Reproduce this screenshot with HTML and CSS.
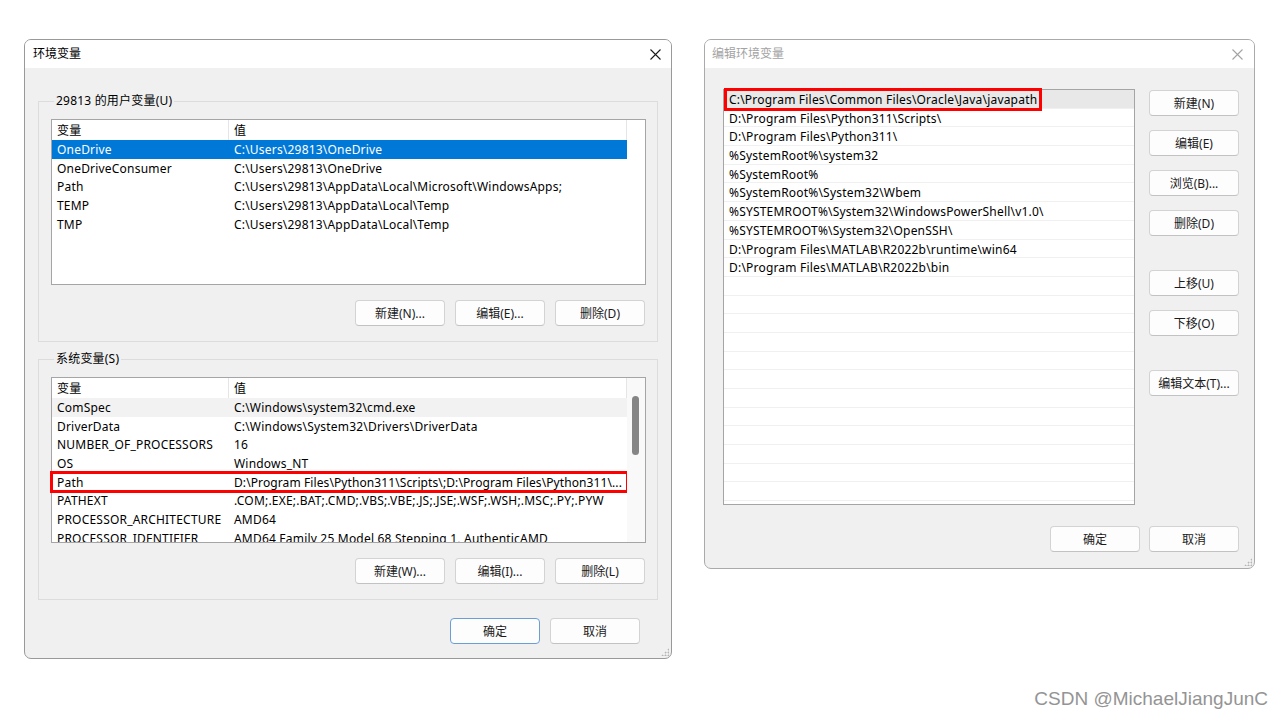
FILE: index.html
```html
<!DOCTYPE html>
<html>
<head>
  <meta charset="UTF-8">
  <title>环境变量</title>
  <link rel="stylesheet" href="styles.css">
</head>
<body>
  <div class="desk">
    <div class="dialog env">
      <div class="titlebar">
        <span class="title">环境变量</span>
        <span class="close">
          <svg width="11" height="11" viewBox="0 0 11 11"><path d="M0.5 0.5L10.5 10.5M10.5 0.5L0.5 10.5" stroke="currentColor" stroke-width="1.1"/></svg>
        </span>
      </div>
      <div class="body">
        <fieldset class="group">
          <legend>29813 的用户变量(U)</legend>
          <div class="list">
            <div class="list-main">
              <div class="list-head"><span class="c1">变量</span><span class="c2">值</span></div>
              <div class="row selected"><span class="c1">OneDrive</span><span class="c2">C:\Users\29813\OneDrive</span></div>
              <div class="row"><span class="c1">OneDriveConsumer</span><span class="c2">C:\Users\29813\OneDrive</span></div>
              <div class="row"><span class="c1">Path</span><span class="c2">C:\Users\29813\AppData\Local\Microsoft\WindowsApps;</span></div>
              <div class="row"><span class="c1">TEMP</span><span class="c2">C:\Users\29813\AppData\Local\Temp</span></div>
              <div class="row"><span class="c1">TMP</span><span class="c2">C:\Users\29813\AppData\Local\Temp</span></div>
            </div>
            <div class="list-side"></div>
          </div>
          <div class="btns">
            <button class="btn">新建(N)...</button>
            <button class="btn">编辑(E)...</button>
            <button class="btn">删除(D)</button>
          </div>
        </fieldset>

        <fieldset class="group sys">
          <legend>系统变量(S)</legend>
          <div class="list">
            <div class="list-main">
              <div class="list-head"><span class="c1">变量</span><span class="c2">值</span></div>
              <div class="row hover"><span class="c1">ComSpec</span><span class="c2">C:\Windows\system32\cmd.exe</span></div>
              <div class="row"><span class="c1">DriverData</span><span class="c2">C:\Windows\System32\Drivers\DriverData</span></div>
              <div class="row"><span class="c1">NUMBER_OF_PROCESSORS</span><span class="c2">16</span></div>
              <div class="row"><span class="c1">OS</span><span class="c2">Windows_NT</span></div>
              <div class="row marked"><span class="c1">Path</span><span class="c2 tight">D:\Program Files\Python311\Scripts\;D:\Program Files\Python311\...</span></div>
              <div class="row"><span class="c1">PATHEXT</span><span class="c2">.COM;.EXE;.BAT;.CMD;.VBS;.VBE;.JS;.JSE;.WSF;.WSH;.MSC;.PY;.PYW</span></div>
              <div class="row"><span class="c1">PROCESSOR_ARCHITECTURE</span><span class="c2">AMD64</span></div>
              <div class="row cut"><span class="c1">PROCESSOR_IDENTIFIER</span><span class="c2">AMD64 Family 25 Model 68 Stepping 1, AuthenticAMD</span></div>
            </div>
            <div class="list-side scroll"><div class="thumb"></div></div>
          </div>
          <div class="btns">
            <button class="btn">新建(W)...</button>
            <button class="btn">编辑(I)...</button>
            <button class="btn">删除(L)</button>
          </div>
        </fieldset>

        <div class="footer">
          <button class="btn default">确定</button>
          <button class="btn">取消</button>
        </div>
      </div>
      <span class="grip"></span>
    </div>

    <div class="dialog edit inactive">
      <div class="titlebar">
        <span class="title">编辑环境变量</span>
        <span class="close">
          <svg width="11" height="11" viewBox="0 0 11 11"><path d="M0.5 0.5L10.5 10.5M10.5 0.5L0.5 10.5" stroke="currentColor" stroke-width="1.1"/></svg>
        </span>
      </div>
      <div class="body">
        <div class="edit-main">
          <div class="path-list">
            <div class="prow current"><span class="boxed">C:\Program Files\Common Files\Oracle\Java\javapath</span></div>
            <div class="prow">D:\Program Files\Python311\Scripts\</div>
            <div class="prow">D:\Program Files\Python311\</div>
            <div class="prow">%SystemRoot%\system32</div>
            <div class="prow">%SystemRoot%</div>
            <div class="prow">%SystemRoot%\System32\Wbem</div>
            <div class="prow">%SYSTEMROOT%\System32\WindowsPowerShell\v1.0\</div>
            <div class="prow">%SYSTEMROOT%\System32\OpenSSH\</div>
            <div class="prow">D:\Program Files\MATLAB\R2022b\runtime\win64</div>
            <div class="prow">D:\Program Files\MATLAB\R2022b\bin</div>
            <div class="prow"></div>
            <div class="prow"></div>
            <div class="prow"></div>
            <div class="prow"></div>
            <div class="prow"></div>
            <div class="prow"></div>
            <div class="prow"></div>
            <div class="prow"></div>
            <div class="prow"></div>
            <div class="prow"></div>
            <div class="prow"></div>
            <div class="prow"></div>
          </div>
          <div class="side">
            <button class="btn">新建(N)</button>
            <button class="btn">编辑(E)</button>
            <button class="btn">浏览(B)...</button>
            <button class="btn">删除(D)</button>
            <button class="btn sep">上移(U)</button>
            <button class="btn">下移(O)</button>
            <button class="btn sep">编辑文本(T)...</button>
          </div>
        </div>
        <div class="footer">
          <button class="btn">确定</button>
          <button class="btn">取消</button>
        </div>
      </div>
      <span class="grip"></span>
    </div>
  </div>

  <div class="watermark">CSDN @MichaelJiangJunC</div>
</body>
</html>
```

FILE: styles.css
```css
* {
  box-sizing: border-box;
  margin: 0;
  padding: 0;
}

body {
  width: 1280px;
  height: 720px;
  position: relative;
  overflow: hidden;
  background: #fff;
  font-family: "Noto Sans", "Noto Sans CJK SC", sans-serif;
  font-size: 12px;
  letter-spacing: 0.2px;
  color: #000;
}

.desk {
  display: flex;
  align-items: flex-start;
  gap: 32px;
  padding: 39px 0 0 24px;
}

/* window frame */

.dialog {
  position: relative;
  display: flex;
  flex-direction: column;
  border: 1px solid #999;
  border-radius: 7px;
  background: #f0f0f0;
  overflow: hidden;
}

.dialog.env {
  width: 648px;
  height: 620px;
}

.dialog.edit {
  width: 551px;
  height: 530px;
  border-color: #aaa;
}

.titlebar {
  height: 28px;
  flex: none;
  display: flex;
  align-items: center;
  justify-content: space-between;
  background: #fff;
  padding: 0 10px 0 8px;
}

.title {
  line-height: 16px;
  letter-spacing: 0;
}

.close {
  display: flex;
  color: #1b1b1b;
}

.inactive .titlebar {
  padding-left: 7px;
  padding-right: 11px;
}

.inactive .title,
.inactive .close {
  color: #a3a3a3;
}

.body {
  flex: 1;
  display: flex;
  flex-direction: column;
}

.env .body {
  padding: 25px 13px 0;
}

/* group boxes */

.group {
  border: 1px solid #dcdcdc;
  padding: 10px 11px 15px 12px;
}

.group.sys {
  margin-top: 9px;
  padding-top: 10px;
}

.group legend {
  line-height: 16px;
  padding: 0 2px;
  margin-left: 3px;
}

.list {
  height: 166px;
  display: flex;
  border: 1px solid #a5a5a5;
  background: #fff;
}

.list-main {
  width: 575px;
  flex: none;
}

.list-side {
  flex: 1;
}

.list-side.scroll {
  background: #f9f9f9;
}

.thumb {
  width: 7px;
  height: 59px;
  margin: 18px 0 0 5px;
  border-radius: 4px;
  background: #858585;
}

.list-head {
  height: 20px;
  display: flex;
  border-right: 1px solid #e5e5e5;
}

.list-head span {
  padding-top: 2px;
  line-height: 18px;
}

.list-head .c1 {
  border-right: 1px solid #e5e5e5;
}

.row {
  height: 18.7px;
  line-height: 18.7px;
  padding-top: 1px;
  display: flex;
  white-space: nowrap;
}

.c1 {
  width: 177px;
  flex: none;
  padding-left: 5px;
  overflow: hidden;
}

.c2 {
  flex: 1;
  padding-left: 5px;
  overflow: hidden;
  white-space: nowrap;
}

.c2.tight {
  letter-spacing: 0.1px;
}

.row.selected {
  background: #0078d7;
  color: #fff;
}

.row.hover {
  background: #f2f2f2;
}

.row.marked {
  outline: 3px solid #f00;
  outline-offset: -1px;
}

.row.cut {
  height: 13px;
  overflow: hidden;
}

/* buttons */

.btns {
  display: flex;
  justify-content: flex-end;
  gap: 10px;
  margin-top: 15px;
  padding-right: 1px;
}

.btn {
  width: 90px;
  height: 26px;
  border: 1px solid #d3d3d3;
  border-bottom-color: #c2c2c2;
  border-radius: 4px;
  background: #fdfdfd;
  font-family: inherit;
  font-size: 12px;
  letter-spacing: 0;
  color: #1a1a1a;
}

.btn.default {
  border: 1px solid #6a9fd6;
}

.env .footer {
  display: flex;
  justify-content: flex-end;
  gap: 10px;
  margin-top: 18px;
  padding-right: 18px;
}

/* edit dialog */

.edit .body {
  padding: 21px 14px 0 18px;
}

.edit-main {
  display: flex;
  gap: 14px;
}

.path-list {
  width: 412px;
  height: 416px;
  border: 1px solid #a5a5a5;
  background: #fff;
  white-space: nowrap;
}

.prow {
  height: 18.7px;
  line-height: 18.7px;
  padding: 1px 0 0 5px;
  border-bottom: 1px solid #f0f0f0;
}

.prow.current {
  background: #e8e8e8;
  padding: 0 0 0 3px;
}

.boxed {
  display: inline-block;
  line-height: 16px;
  vertical-align: top;
  margin-top: 1px;
  padding: 1px 2px 0;
  outline: 3px solid #f00;
}

.side {
  display: flex;
  flex-direction: column;
  gap: 14px;
  margin-top: 1px;
}

.side .sep {
  margin-top: 20px;
}

.edit .footer {
  display: flex;
  justify-content: flex-end;
  gap: 9px;
  margin-top: 21px;
  padding-right: 1px;
}

.grip {
  position: absolute;
  right: 2px;
  bottom: 2px;
  width: 8px;
  height: 8px;
  background: radial-gradient(circle, #b5b5b5 0.8px, transparent 1.2px) 0 0 / 3px 3px;
  clip-path: polygon(100% 0, 100% 100%, 0 100%);
}

.watermark {
  position: absolute;
  right: 12px;
  bottom: 10px;
  font-family: "Liberation Sans", sans-serif;
  font-size: 19px;
  letter-spacing: 0;
  color: #949494;
}
```
